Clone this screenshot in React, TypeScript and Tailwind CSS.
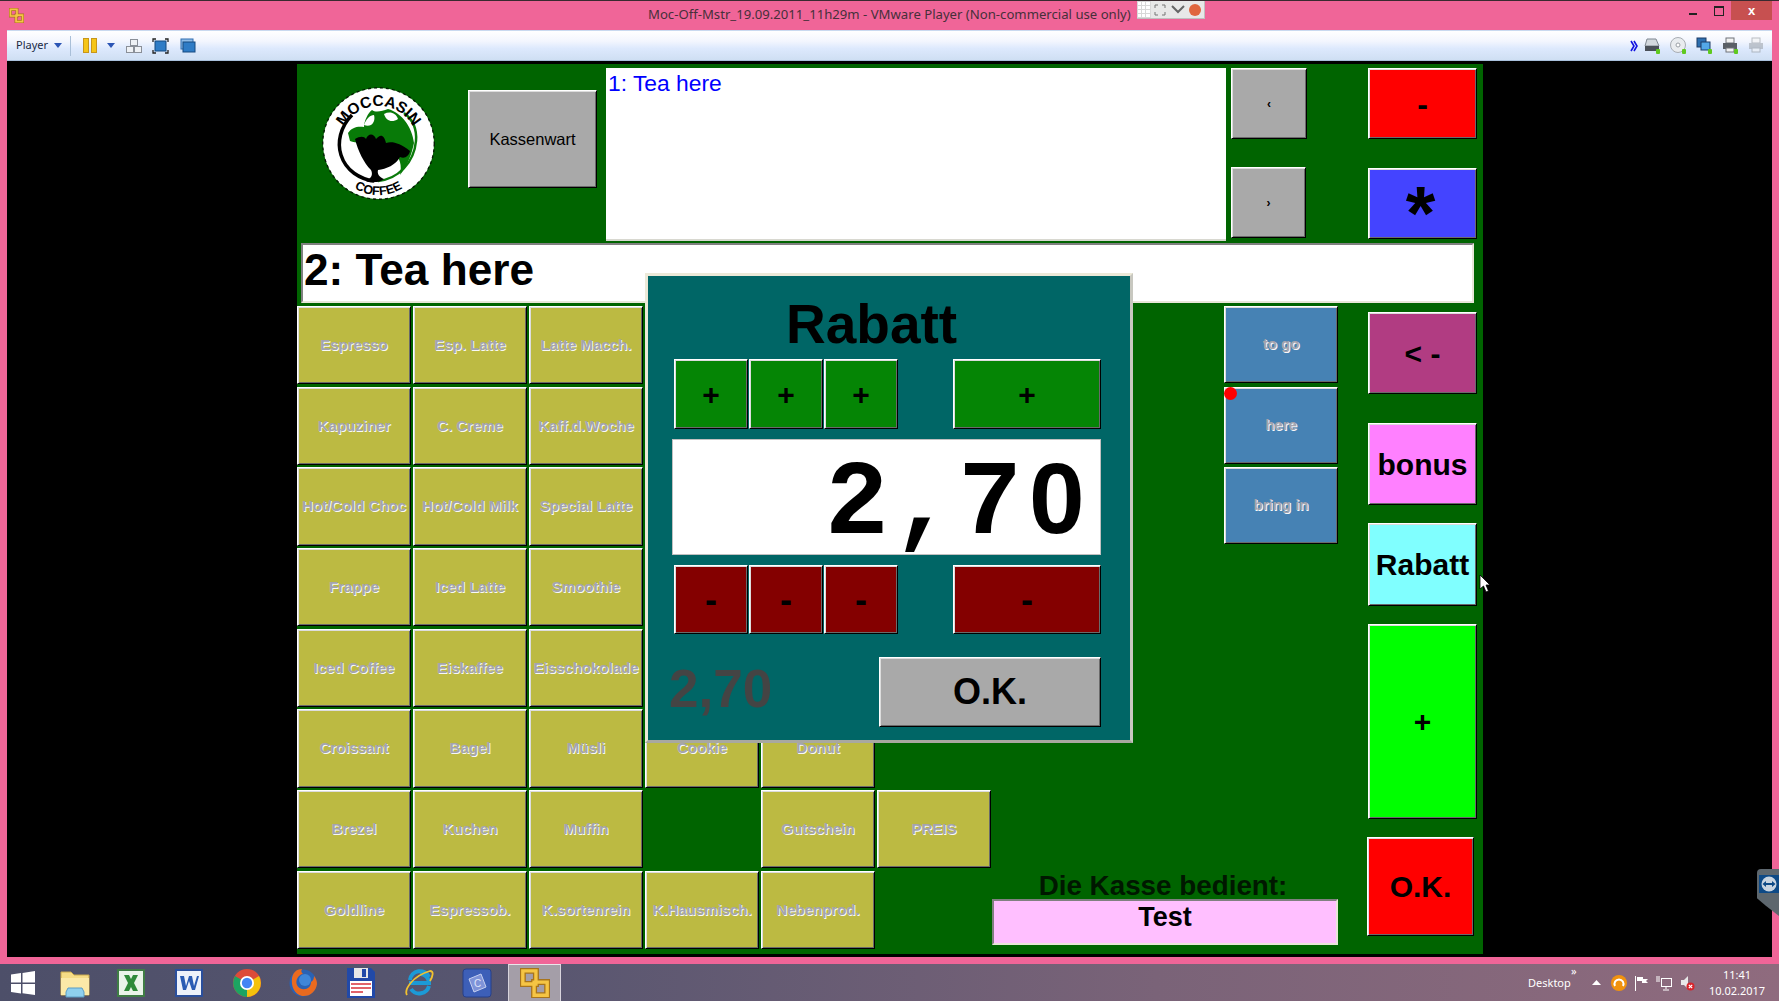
import React from 'react';

// Raised WinForms style edge
const raised =
  'flex items-center justify-center border border-t-white border-l-white border-r-black border-b-black shadow-[inset_1px_1px_0_#dcdcdc,inset_-1px_-1px_0_#6a6a6a]';
const engraved = 'font-bold text-[15px] text-[#a4a4ae] [text-shadow:1px_1px_0_#f8f8f8] whitespace-nowrap';
const sunken = 'border-2 border-t-[#808080] border-l-[#808080] border-r-[#e8e6d8] border-b-[#e8e6d8]';

const productRows: (string | null)[][] = [
  ['Espresso', 'Esp. Latte', 'Latte Macch.', null, null, null],
  ['Kapuziner', 'C. Creme', 'Kaff.d.Woche', null, null, null],
  ['Hot/Cold Choc', 'Hot/Cold Milk', 'Special Latte', null, null, null],
  ['Frappe', 'Iced Latte', 'Smoothie', null, null, null],
  ['Iced Coffee', 'Eiskaffee', 'Eisschokolade', null, null, null],
  ['Croissant', 'Bagel', 'Müsli', 'Cookie', 'Donut', null],
  ['Brezel', 'Kuchen', 'Muffin', null, 'Gutschein', 'PREIS'],
  ['Goldline', 'Espressob.', 'K.sortenrein', 'K.Hausmisch.', 'Nebenprod.', null],
];

const Logo = () => (
  <svg width="113" height="113" viewBox="0 0 113 113" className="shrink-0">
    <circle cx="56.5" cy="56.5" r="55.5" fill="#ffffff" />
    <circle cx="56.5" cy="56.5" r="55.8" fill="none" stroke="#052005" strokeWidth="1.4" strokeDasharray="3 3" />
    <defs>
      <path id="logoTop" d="M 17.5 58 A 39 39 0 0 1 95.5 58" />
      <path id="logoBottom" d="M 22 92 A 45 45 0 0 0 91 92" />
    </defs>
    <path d="M30 28 C18 40 15 56 19 68 C24 84 38 92 52 94" fill="none" stroke="#000000" strokeWidth="3.5" />
    <path d="M56 94 C76 92 92 76 94 54 C95 42 90 32 82 26" fill="none" stroke="#0b7a0b" strokeWidth="2.5" />
    <path d="M26 46 C30 40 36 39 42 40 C42 34 46 26 50 23 C54 26 60 24 66 22 C80 26 90 40 92 56 C90 66 86 78 78 88 C80 78 78 72 72 64 C60 54 40 58 28 54 Z" fill="#087a08" />
    <path d="M62 27 C68 24 74 26 76 32 C70 36 64 34 62 27 Z" fill="#ffffff" />
    <path d="M42 38 C44 32 48 28 52 28 C54 35 49 41 42 38 Z" fill="#ffffff" />
    <path d="M33 52 C38 49 42 49 44 52 C46 46 52 46 54 52 C58 47 62 47 64 56 C70 54 78 56 88 64 C87 69 83 72 78 70 C74 78 64 82 56 83 C55 87 57 90 62 92 C58 96 46 96 44 94 C50 91 51 87 49 83 C42 76 36 64 33 52 Z" fill="#000000" />
    <text fontFamily="Liberation Sans" fontWeight="bold" fontSize="15.5" fill="#000000">
      <textPath href="#logoTop" startOffset="50%" textAnchor="middle">MOCCASIN</textPath>
    </text>
    <text fontFamily="Liberation Sans" fontWeight="bold" fontSize="12.5" fill="#000000">
      <textPath href="#logoBottom" startOffset="50%" textAnchor="middle">COFFEE</textPath>
    </text>
  </svg>
);

const VmwareIcon = ({ size }: { size: number }) => (
  <svg width={size} height={size} viewBox="0 0 16 16" fill="none">
    <path d="M1.5 1.5h7v7h-7z" stroke="#a8741c" strokeWidth="3.2" />
    <path d="M7.5 7.5h7v7h-7z" stroke="#a8741c" strokeWidth="3.2" />
    <path d="M1.5 1.5h7v7h-7z" stroke="#f6c544" strokeWidth="1.8" />
    <path d="M7.5 7.5h7v7h-7z" stroke="#f6c544" strokeWidth="1.8" />
  </svg>
);

const ToolbarIcons = () => (
  <div className="flex items-center h-full">
    <span className="ml-[9px] text-[11px] text-[#1c2a44] [font-family:'Noto_Sans',sans-serif] w-[32px]">Player</span>
    <svg width="8" height="5" viewBox="0 0 8 5" className="ml-[6px]"><path d="M0 0h8L4 5z" fill="#2b55b5" /></svg>
    <div className="ml-[8px] w-px h-[20px] bg-[#a9bfd8]" />
    <div className="ml-[12px] flex gap-[2px]">
      <div className="w-[6px] h-[15px] bg-[#f5c518] border border-[#c8961a]" />
      <div className="w-[6px] h-[15px] bg-[#f5c518] border border-[#c8961a]" />
    </div>
    <svg width="8" height="5" viewBox="0 0 8 5" className="ml-[10px]"><path d="M0 0h8L4 5z" fill="#2b55b5" /></svg>
    <svg width="18" height="16" viewBox="0 0 18 16" className="ml-[10px]" fill="#eef1f5" stroke="#8a8f98">
      <rect x="5.5" y="1.5" width="7" height="6" />
      <rect x="1.5" y="8.5" width="7" height="6" />
      <rect x="9.5" y="8.5" width="7" height="6" />
    </svg>
    <svg width="17" height="16" viewBox="0 0 17 16" className="ml-[9px]">
      <rect x="3" y="3" width="11" height="10" fill="#2f7cc6" stroke="#174a80" />
      <path d="M1 4V1h3 M13 1h3v3 M1 12v3h3 M13 15h3v-3" fill="none" stroke="#222" strokeWidth="1.3" />
    </svg>
    <svg width="16" height="15" viewBox="0 0 16 15" className="ml-[11px]">
      <rect x="1" y="1" width="12" height="10" fill="#8fbce8" stroke="#2f6db0" />
      <rect x="3" y="4" width="12" height="10" fill="#2f7cc6" stroke="#174a80" />
    </svg>
  </div>
);

const GreenLed = () => <rect x="12" y="12" width="4" height="5" rx="1" fill="#5fc91e" />;

const DeviceIcons = () => (
  <div className="flex items-center h-full gap-[9px] pr-[7px]">
    <svg width="8" height="12" viewBox="0 0 8 12" fill="none" stroke="#1212e0" strokeWidth="1.6">
      <path d="M1 1l3 5-3 5 M4 1l3 5-3 5" />
    </svg>
    <svg width="17" height="17" viewBox="0 0 17 17" className="-ml-[3px]">
      <path d="M3 2h9l3 7H1z" fill="#d3d8de" stroke="#7f8790" />
      <rect x="1" y="9" width="14" height="5" fill="#4a5058" />
      <GreenLed />
    </svg>
    <svg width="17" height="17" viewBox="0 0 17 17">
      <circle cx="8" cy="8" r="7.5" fill="#e9ecef" stroke="#a8adb3" />
      <circle cx="8" cy="8" r="2" fill="#ffffff" stroke="#9aa0a6" />
      <GreenLed />
    </svg>
    <svg width="17" height="17" viewBox="0 0 17 17">
      <rect x="1" y="1" width="9" height="9" fill="#2d6fb0" stroke="#1d3c66" />
      <rect x="5" y="5" width="9" height="8" fill="#53a8e8" stroke="#1d3c66" />
      <GreenLed />
    </svg>
    <svg width="17" height="17" viewBox="0 0 17 17">
      <rect x="4" y="1" width="8" height="5" fill="#f3f3f3" stroke="#6f7378" />
      <rect x="1" y="6" width="14" height="6" fill="#5a5f66" />
      <rect x="4" y="11" width="8" height="4" fill="#f3f3f3" stroke="#6f7378" />
      <GreenLed />
    </svg>
    <svg width="17" height="17" viewBox="0 0 17 17" opacity="0.55">
      <rect x="4" y="1" width="8" height="5" fill="#f3f3f3" stroke="#8a8f94" />
      <rect x="1" y="6" width="14" height="6" fill="#9aa0a6" />
      <rect x="4" y="11" width="8" height="4" fill="#f3f3f3" stroke="#8a8f94" />
    </svg>
  </div>
);

const TaskbarIcons = () => (
  <div className="flex items-center h-full">
    <svg width="26" height="26" viewBox="0 0 26 26" className="ml-[10px]" fill="#ffffff">
      <path d="M1 4.5l10-1.4v9.4H1z M12.5 2.9L25 1v11.5H12.5z M1 14h10v9.4L1 22z M12.5 14H25v11l-12.5-1.8z" />
    </svg>
    <svg width="32" height="30" viewBox="0 0 32 30" className="ml-[23px]">
      <path d="M2 4h10l3 3h15v20H2z" fill="#f6dc86" stroke="#c9a94e" />
      <rect x="2" y="10" width="28" height="17" fill="#fbe9a8" />
      <path d="M9 20h14l2 4v5H7v-5z" fill="#8fd0ee" stroke="#5a9cc4" />
    </svg>
    <svg width="30" height="30" viewBox="0 0 30 30" className="ml-[25px]">
      <rect x="2" y="2" width="26" height="26" fill="#eaf4ea" stroke="#3f7d45" strokeWidth="2" />
      <path d="M8 7h5l2 4 2-4h5l-4 8 4 8h-5l-2-4-2 4H8l4-8z" fill="#2f8a3a" />
    </svg>
    <svg width="30" height="30" viewBox="0 0 30 30" className="ml-[28px]">
      <rect x="2" y="2" width="26" height="26" fill="#eef2fa" stroke="#2b4f9c" strokeWidth="2" />
      <path d="M6 8h4l2 10 3-10h3l2 10 3-10h2l-4 14h-3l-3-9-3 9H9z" fill="#2b5cb3" />
    </svg>
    <svg width="30" height="30" viewBox="0 0 30 30" className="ml-[28px]">
      <circle cx="15" cy="15" r="14" fill="#dd4b39" />
      <path d="M15 15 L27 8 A14 14 0 0 1 15 29 Z" fill="#f4c20d" />
      <path d="M15 15 L15 29 A14 14 0 0 1 3 8 Z" fill="#1da462" />
      <circle cx="15" cy="15" r="7" fill="#ffffff" />
      <circle cx="15" cy="15" r="5.2" fill="#4285f4" />
    </svg>
    <svg width="30" height="30" viewBox="0 0 30 30" className="ml-[26px]">
      <circle cx="15" cy="15" r="13.5" fill="#2a62b4" />
      <circle cx="17" cy="12" r="6" fill="#3f86d8" />
      <path d="M4 10C3 18 6 26 14 28c8 1 14-5 15-12 0-3-1-6-3-8 0 3-1 5-3 6 0 5-4 8-9 7-4-1-7-5-5-10 1-3 4-5 6-5-2-2-2-3-1-5C8 1 5 5 4 10z" fill="#ea6a1f" />
    </svg>
    <svg width="30" height="32" viewBox="0 0 30 32" className="ml-[28px]">
      <path d="M1 1h24l4 4v26H1z" fill="#2149a8" />
      <rect x="8" y="1" width="14" height="10" fill="#e7e7e7" />
      <rect x="16" y="2" width="4" height="8" fill="#2149a8" />
      <rect x="4" y="14" width="22" height="15" fill="#ffffff" />
      <path d="M5 17h20 M5 21h20 M5 25h12" stroke="#d8313a" strokeWidth="1.5" />
    </svg>
    <svg width="30" height="30" viewBox="0 0 30 30" className="ml-[28px]">
      <path d="M6 12a10 10 0 0 1 19-3 M5 15h20 c0-5-4-9-9-9 M25 18a10 10 0 0 1-18 3" fill="none" stroke="#1c9ad6" strokeWidth="4" />
      <path d="M3 27C0 22 8 8 26 3c4 0 3 5 0 10" fill="none" stroke="#f2c230" strokeWidth="1.8" />
    </svg>
    <svg width="30" height="30" viewBox="0 0 30 30" className="ml-[28px]">
      <rect x="1" y="1" width="28" height="28" rx="3" fill="#3d5fb8" stroke="#27408a" />
      <path d="M7 11l12-5 5 13-12 5z" fill="#7f93d8" stroke="#c6d0f0" />
      <text x="12" y="19" fontSize="10" fill="#dfe6fa" fontFamily="Liberation Sans">C</text>
    </svg>
    <div className="ml-[16px] w-[53px] h-full flex items-center justify-center bg-[#a49ea8] border-x border-t border-x-[#d8d4dc] border-t-[#e8e6ea]">
      <VmwareIcon size={30} />
    </div>
  </div>
);

const TrayIcons = () => (
  <div className="flex items-center h-full text-white [font-family:'Noto_Sans',sans-serif]">
    <div className="relative w-[52px] text-[11px] leading-none translate-x-[6px]">
      Desktop
      <span className="absolute left-[43px] top-[-12px] text-[11px]">»</span>
    </div>
    <svg width="9" height="5" viewBox="0 0 9 5" className="ml-[18px]"><path d="M4.5 0L9 5H0z" fill="#ffffff" /></svg>
    <svg width="16" height="16" viewBox="0 0 16 16" className="ml-[10px]">
      <circle cx="8" cy="8" r="8" fill="#f0920f" />
      <path d="M4 11a4.5 4.5 0 1 1 8 0" fill="none" stroke="#ffffff" strokeWidth="2" />
    </svg>
    <svg width="15" height="16" viewBox="0 0 15 16" className="ml-[7px]" fill="#ffffff">
      <path d="M1 1h1v15H1z M3 2h6v2h5l-2 2 2 2H8V6H3z" />
    </svg>
    <svg width="16" height="16" viewBox="0 0 16 16" className="ml-[7px]" fill="none" stroke="#ffffff">
      <rect x="5.5" y="3.5" width="10" height="8" />
      <path d="M10 12v2 M7 15h6 M1 1v6 M3 1v6" />
    </svg>
    <svg width="15" height="16" viewBox="0 0 15 16" className="ml-[8px]">
      <path d="M1 5h3l4-4v13l-4-4H1z" fill="#e8e8e8" />
      <circle cx="10.5" cy="11.5" r="4" fill="#d8232a" />
      <path d="M8.8 9.8l3.4 3.4 M12.2 9.8l-3.4 3.4" stroke="#ffffff" strokeWidth="1.2" />
    </svg>
    <div className="ml-[12px] w-[60px] text-center text-[11px] leading-[16px] mr-[12px]">
      <div>11:41</div>
      <div>10.02.2017</div>
    </div>
  </div>
);

const App = () => {
  return (
    <div className="relative w-[1779px] h-[1001px] overflow-hidden flex flex-col bg-[#f06598] [font-family:'Liberation_Sans',Arial,sans-serif]">
      {/* Window title bar */}
      <div className="relative h-[30px] shrink-0 border-t border-t-[#3a2a30] flex items-center">
        <div className="ml-[9px]"><VmwareIcon size={15} /></div>
        <div className="ml-[624px] -mt-[1px] text-[13.15px] text-[#46303a] whitespace-nowrap [font-family:'Noto_Sans',sans-serif]">
          Moc-Off-Mstr_19.09.2011_11h29m - VMware Player (Non-commercial use only)
        </div>
        <div className="ml-[6px] self-start flex items-center w-[68px] h-[18px] bg-[#e8e8e8] border-b border-r border-[#c0c0c0]">
          <div className="w-[14px] h-full grid grid-cols-3 gap-[1px] p-[1px] bg-[#d8d8d8]">
            {Array.from({ length: 12 }).map((_, i) => (
              <div key={i} className="bg-white" />
            ))}
          </div>
          <svg width="12" height="12" viewBox="0 0 12 12" className="ml-[3px]" fill="none" stroke="#777">
            <path d="M1 4V1h3 M8 1h3v3 M1 8v3h3 M8 11h3V8" />
          </svg>
          <svg width="14" height="9" viewBox="0 0 14 9" className="ml-[5px]" fill="none" stroke="#666" strokeWidth="2">
            <path d="M1 1l6 6 6-6" />
          </svg>
          <div className="ml-[4px] w-[12px] h-[12px] rounded-full bg-[#e0663f]" />
        </div>
        <div className="ml-auto mr-[7px] self-start flex items-center h-[19px]">
          <div className="w-[8px] h-[2px] mt-[6px] bg-[#222]" />
          <div className="ml-[17px] w-[10px] h-[10px] border border-t-2 border-[#222]" />
          <div className="ml-[7px] w-[41px] h-full bg-[#c75050] flex items-center justify-center text-white text-[13px] font-bold">x</div>
        </div>
      </div>

      {/* Player window */}
      <div className="mx-[7px] h-[927px] shrink-0 flex flex-col">
        <div className="h-[31px] shrink-0 flex items-center justify-between border-t border-t-[#c9d9ef] border-b border-b-[#a9c0dc] bg-[linear-gradient(180deg,#ffffff_0%,#f3f6fe_35%,#dde9fd_60%,#cfdff3_100%)]">
          <ToolbarIcons />
          <DeviceIcons />
        </div>

        <div className="flex-1 bg-black pt-[3px] pl-[290px]">
          {/* Till panel */}
          <div className="relative w-[1186px] h-[890px] bg-[#006400] flex flex-col pt-[4px]">
            <div className="flex h-[173px] shrink-0">
              <div className="ml-[25px] mt-[19px]"><Logo /></div>
              <div className={`${raised} ml-[33px] mt-[22px] w-[129px] h-[98px] bg-[#a9a9a9] text-[16.5px] text-black`}>Kassenwart</div>
              <div className="ml-[9px] w-[620px] h-[173px] bg-white border-b-2 border-b-[#d8d8d0] pl-[2px] pt-[2px] text-[22.8px] leading-[26px] text-[#0000ff]">1: Tea here</div>
              <div className="ml-[5px] w-[76px] flex flex-col">
                <div className={`${raised} h-[71px] bg-[#a9a9a9] text-[12px] font-bold text-black`}>‹</div>
                <div className={`${raised} mt-[28px] w-[75px] h-[71px] bg-[#a9a9a9] text-[12px] font-bold text-black`}>›</div>
              </div>
              <div className="ml-[61px] w-[109px] flex flex-col">
                <div className={`${raised} h-[71px] bg-[#ff0000] text-[32px] font-bold text-black`}>-</div>
                <div className={`${raised} mt-[29px] h-[71px] bg-[#4444ff] text-[76px] leading-none font-bold text-black`}>
                  <span className="mt-[18px] -ml-[4px]">*</span>
                </div>
              </div>
            </div>

            <div className={`${sunken} ml-[4px] mt-[2px] pl-[1px] w-[1173px] h-[60px] shrink-0 bg-white text-[44.2px] leading-[50px] font-bold text-black`}>
              2: Tea here
            </div>

            <div className="flex mt-[3px]">
              {/* Product buttons */}
              <div className="grid grid-cols-[repeat(6,114px)] grid-rows-[repeat(8,78.3px)] gap-x-[2px] gap-y-[2.4px]">
                {productRows.flat().map((label, i) =>
                  label ? (
                    <div key={i} className={`${raised} bg-[#bcba42] ${engraved}`}>{label}</div>
                  ) : (
                    <div key={i} />
                  )
                )}
              </div>

              {/* Order type and operator */}
              <div className="ml-[1px] w-[346px] h-[642px] flex flex-col pb-[3px]">
                <div className="ml-auto w-[114px] flex flex-col">
                  <div className={`${raised} h-[77px] bg-[#4682b4] ${engraved}`}>to go</div>
                  <div className={`${raised} mt-[4px] h-[77px] bg-[#4682b4] ${engraved}`}>here</div>
                  <div className={`${raised} mt-[3px] h-[77px] bg-[#4682b4] ${engraved}`}>bring in</div>
                </div>
                <div className="mt-auto pr-[4px] text-center text-[27.8px] leading-[28px] translate-y-[1px] font-bold text-[#001800]">Die Kasse bedient:</div>
                <div className={`${sunken} h-[46px] bg-[#ffbfff] text-center text-[27px] leading-[32px] font-bold text-black`}>Test</div>
              </div>

              {/* Function keys */}
              <div className="ml-[30px] w-[109px] pt-[6px] flex flex-col">
                <div className={`${raised} h-[82px] bg-[#b13c82] text-[30px] font-bold text-black`}>&lt; -</div>
                <div className={`${raised} mt-[29px] h-[82px] bg-[#ff80ff] text-[30px] font-bold text-black`}>bonus</div>
                <div className={`${raised} mt-[18px] h-[83px] bg-[#80ffff] text-[30px] font-bold text-black`}>Rabatt</div>
                <div className={`${raised} mt-[18px] h-[195px] bg-[#00ff00] text-[30px] font-bold text-black`}>+</div>
                <div className={`${raised} mt-[18px] -ml-[1px] w-[107px] h-[99px] bg-[#ff0000] text-[30px] font-bold text-black`}>O.K.</div>
              </div>
            </div>

            {/* Red status dot */}
            <div className="absolute left-[927px] top-[323px] w-[13px] h-[13px] rounded-full bg-[#ff0000]" />

            {/* Rabatt dialog */}
            <div className="absolute left-[348px] top-[209px] w-[488px] h-[470px] bg-[#006666] border-[3px] border-t-[#ece9d8] border-l-[#ece9d8] border-r-[#c8c8c0] border-b-[#a8a8a0] flex flex-col">
              <div className="mt-[17px] pl-[138px] h-[62px] text-[55px] leading-[62px] font-bold text-black">Rabatt</div>
              <div className="mt-[4px] ml-[26px] flex h-[70px]">
                <div className={`${raised} w-[74px] bg-[#058505] text-[30px] font-bold text-black`}>+</div>
                <div className={`${raised} ml-[1px] w-[74px] bg-[#058505] text-[30px] font-bold text-black`}>+</div>
                <div className={`${raised} ml-[1px] w-[74px] bg-[#058505] text-[30px] font-bold text-black`}>+</div>
                <div className={`${raised} ml-[55px] w-[148px] bg-[#058505] text-[30px] font-bold text-black`}>+</div>
              </div>
              <div className="mt-[10px] ml-[24px] w-[429px] h-[116px] bg-white border border-[#c0c0c0] flex items-center justify-end pr-[10px] pt-[12px]">
                <div className="flex items-baseline text-[106px] leading-none font-bold text-black text-center">
                  <span className="w-[66.6px] [font-family:'Liberation_Mono',monospace]">2</span>
                  <span className="w-[66.6px] [font-family:'Liberation_Mono',monospace]">,</span>
                  <span className="w-[66.6px] [font-family:'Liberation_Mono',monospace]">7</span>
                  <span className="w-[66.6px] text-[100px]">0</span>
                </div>
              </div>
              <div className="mt-[10px] ml-[26px] flex h-[69px]">
                <div className={`${raised} w-[74px] bg-[#840000] text-[36px] font-bold text-black`}>-</div>
                <div className={`${raised} ml-[1px] w-[74px] bg-[#840000] text-[36px] font-bold text-black`}>-</div>
                <div className={`${raised} ml-[1px] w-[74px] bg-[#840000] text-[36px] font-bold text-black`}>-</div>
                <div className={`${raised} ml-[55px] w-[148px] bg-[#840000] text-[36px] font-bold text-black`}>-</div>
              </div>
              <div className="mt-[23px] flex items-center h-[70px]">
                <div className="w-[231px] pl-[21px] -mt-[7px] text-[53px] leading-none font-bold text-[#444444]">2,70</div>
                <div className={`${raised} w-[222px] h-full bg-[#a9a9a9] text-[36px] font-bold text-black`}>O.K.</div>
              </div>
            </div>

            {/* Mouse pointer */}
            <svg width="12" height="19" viewBox="0 0 12 19" className="absolute left-[1182px] top-[510px]">
              <path d="M1 1v14l3.5-3 2.5 6 2.5-1-2.5-6H11z" fill="#ffffff" stroke="#000000" strokeWidth="0.8" />
            </svg>
          </div>
        </div>
      </div>

      <div className="h-[7px] shrink-0" />

      {/* Windows taskbar */}
      <div className="flex-1 flex items-center justify-between bg-[linear-gradient(90deg,#4d4f69_0%,#585670_30%,#7a6378_65%,#8f6b7e_100%)]">
        <TaskbarIcons />
        <TrayIcons />
      </div>

      {/* TeamViewer tab */}
      <div className="absolute left-[1757px] top-[869px] w-[22px] h-[47px] bg-[#5d676e] rounded-tl-[4px] [clip-path:polygon(0_0,100%_0,100%_100%,40%_78%,0_62%)] pt-[6px] pl-[2px]">
        <div className="w-[20px] h-[18px] bg-[#0e4a86] flex items-center justify-center">
          <svg width="16" height="16" viewBox="0 0 16 16">
            <circle cx="8" cy="8" r="7.5" fill="#c8d4e0" />
            <path d="M1.5 8L5 5v2h6V5l3.5 3L11 11V9H5v2z" fill="#0e4a86" />
          </svg>
        </div>
      </div>
    </div>
  );
};

export default App;
